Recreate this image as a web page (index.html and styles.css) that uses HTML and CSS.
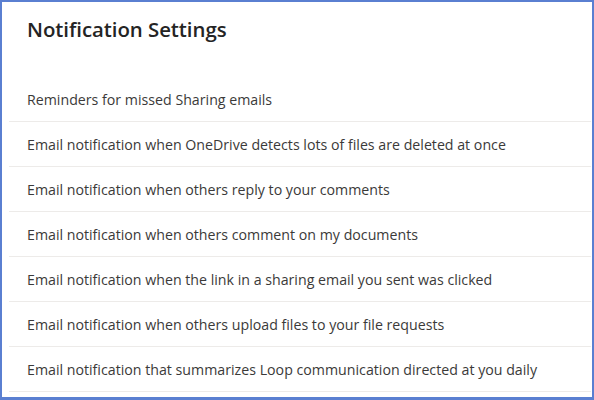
FILE: index.html
```html
<!DOCTYPE html>
<html>
<head>
<meta charset="utf-8">
<link rel="stylesheet" href="styles.css">
</head>
<body>
<div class="frame">
  <div class="header"><h1 class="title">Notification Settings</h1></div>
  <ul class="list">
    <li class="row">Reminders for missed Sharing emails</li>
    <li class="row">Email notification when OneDrive detects lots of files are deleted at once</li>
    <li class="row">Email notification when others reply to your comments</li>
    <li class="row">Email notification when others comment on my documents</li>
    <li class="row">Email notification when the link in a sharing email you sent was clicked</li>
    <li class="row">Email notification when others upload files to your file requests</li>
    <li class="row">Email notification that summarizes Loop communication directed at you daily</li>
  </ul>
</div>
</body>
</html>
```
FILE: styles.css
```css
html, body {
  margin: 0;
  padding: 0;
  background: #ffffff;
}
.frame {
  width: 594px;
  height: 400px;
  box-sizing: border-box;
  border: 2px solid #5a7fd1;
  border-bottom-width: 3px;
  padding: 0 1px 0 7px;
  font-family: "Open Sans", "Noto Sans", sans-serif;
  overflow: hidden;
}
.header {
  padding: 13px 0 0 18px;
  height: 75px;
  box-sizing: border-box;
}
.title {
  margin: 0;
  font-size: 20.4px;
  font-weight: 600;
  line-height: 28px;
  color: #242424;
  letter-spacing: -0.05px;
}
.list {
  list-style: none;
  margin: 0;
  padding: 0;
}
.row {
  height: 44px;
  line-height: 45px;
  border-bottom: 1px solid #edebe9;
  padding-left: 18px;
  font-size: 14.2px;
  color: #3b3a39;
  white-space: nowrap;
}
```
